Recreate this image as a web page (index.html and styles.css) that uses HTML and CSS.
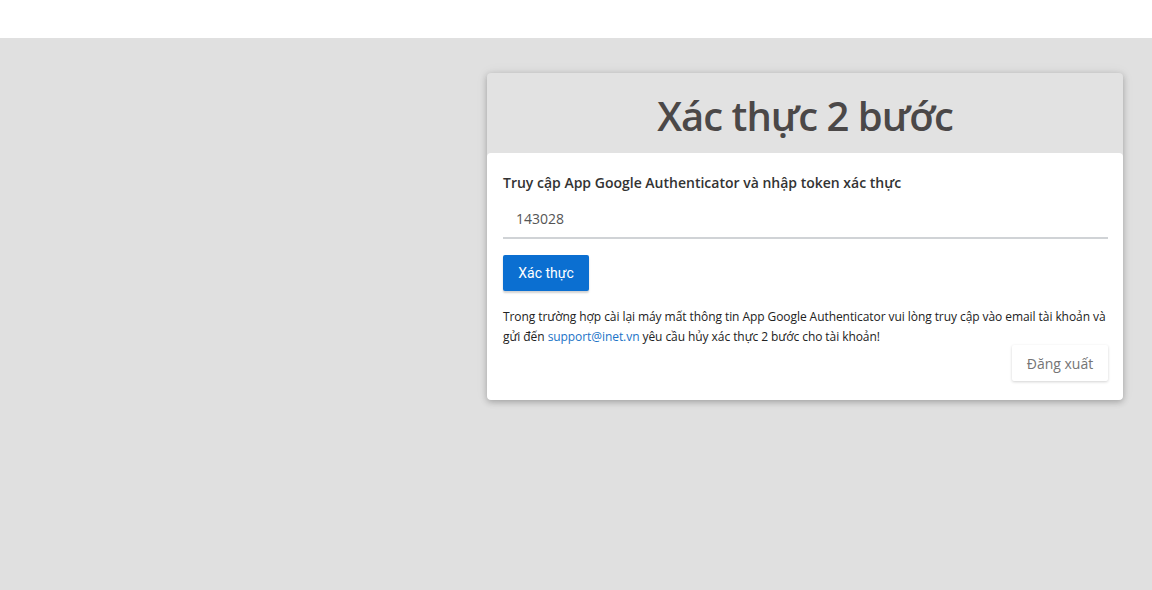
FILE: index.html
```html
<!DOCTYPE html>
<html lang="vi">
<head>
<meta charset="utf-8">
<title>Xác thực 2 bước</title>
<link rel="stylesheet" href="styles.css">
</head>
<body>
<header class="topbar"></header>
<main class="page">
  <section class="card">
    <div class="card-header">
      <h1 class="card-title">Xác thực 2 bước</h1>
    </div>
    <div class="card-body">
      <label class="field-label" for="token">Truy cập App Google Authenticator và nhập token xác thực</label>
      <input class="field-input" id="token" type="text" value="143028">
      <button class="btn-primary" type="button">Xác thực</button>
      <p class="note">Trong trường hợp cài lại máy mất thông tin App Google Authenticator vui lòng truy cập vào email tài khoản và gửi đến <a class="link" href="#">support@inet.vn</a> yêu cầu hủy xác thực 2 bước cho tài khoản!</p>
      <div class="actions">
        <button class="btn-flat" type="button">Đăng xuất</button>
      </div>
    </div>
  </section>
</main>
</body>
</html>
```
FILE: styles.css
```css
* { box-sizing: border-box; }
html, body { margin: 0; height: 100%; }
body {
  font-family: "Open Sans", "Liberation Sans", sans-serif;
  background: #e0e0e0;
  color: #333;
  display: flex;
  flex-direction: column;
}
.topbar {
  height: 38px;
  background: #fff;
  flex: none;
}
.page {
  flex: 1;
  display: flex;
  justify-content: flex-end;
  align-items: flex-start;
  padding: 35px 29px 0 0;
}
.card {
  width: 636px;
  border-radius: 4px;
  background: #e2e2e2;
  box-shadow: 0 2px 6px rgba(0,0,0,0.25), 0 0 14px rgba(0,0,0,0.06);
  overflow: hidden;
}
.card-header {
  height: 80px;
  display: flex;
  align-items: center;
  justify-content: center;
  padding-top: 4px;
}
.card-title {
  margin: 0;
  font-size: 40px;
  font-weight: 600;
  color: #4b4848;
  letter-spacing: -1px;
}
.card-body {
  background: #fff;
  border-radius: 4px;
  padding: 20px 15px 19px 16px;
  display: flex;
  flex-direction: column;
  align-items: flex-start;
}
.field-label {
  font-size: 14px;
  font-weight: 600;
  color: #333;
  line-height: 20px;
}
.field-input {
  width: 100%;
  margin-top: 12px;
  height: 34px;
  border: 0;
  border-bottom: 2px solid #d0d3d6;
  padding: 0 13px 5px;
  font-family: "Open Sans", "Liberation Sans", sans-serif;
  font-size: 14px;
  color: #555;
  outline: none;
  background: transparent;
}
.btn-primary {
  margin-top: 16px;
  height: 36px;
  width: 86px;
  border: 0;
  border-radius: 2px;
  background: #0b6fd1;
  color: #fff;
  font-family: Roboto, "Liberation Sans", sans-serif;
  font-size: 14px;
  font-weight: 400;
  box-shadow: 0 2px 2px rgba(0,0,0,0.18);
  cursor: pointer;
}
.note {
  margin: 16px 0 0;
  font-size: 12px;
  line-height: 20px;
  letter-spacing: -0.07px;
  color: #222;
}
.link {
  color: #1a73c7;
  text-decoration: none;
}
.actions {
  align-self: stretch;
  display: flex;
  justify-content: flex-end;
  margin-top: -2px;
}
.btn-flat {
  height: 36px;
  width: 96px;
  border: 0;
  border-radius: 2px;
  background: #fff;
  color: #757575;
  font-family: "Open Sans", "Liberation Sans", sans-serif;
  font-size: 14px;
  box-shadow: 0 1px 3px rgba(0,0,0,0.18);
  cursor: pointer;
}
```
